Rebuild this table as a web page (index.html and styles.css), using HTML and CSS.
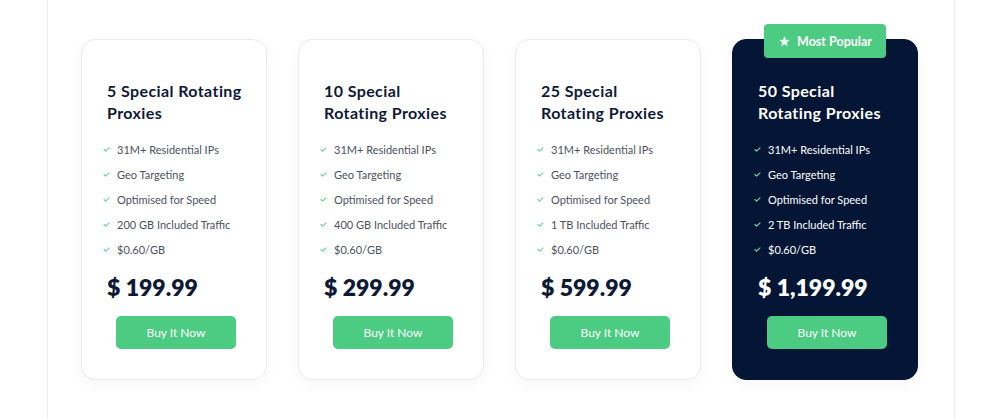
FILE: index.html
```html
<!DOCTYPE html>
<html>
<head>
<meta charset="utf-8">
<link rel="stylesheet" href="styles.css">
</head>
<body>
<div class="frame">
  <div class="cards">
    <div class="card">
      <h3 class="title">5 Special Rotating Proxies</h3>
      <ul class="features">
        <li><svg class="chk" viewBox="0 0 8 6"><polyline points="1,3 3,5 7,1"/></svg>31M+ Residential IPs</li>
        <li><svg class="chk" viewBox="0 0 8 6"><polyline points="1,3 3,5 7,1"/></svg>Geo Targeting</li>
        <li><svg class="chk" viewBox="0 0 8 6"><polyline points="1,3 3,5 7,1"/></svg>Optimised for Speed</li>
        <li><svg class="chk" viewBox="0 0 8 6"><polyline points="1,3 3,5 7,1"/></svg>200 GB Included Traffic</li>
        <li><svg class="chk" viewBox="0 0 8 6"><polyline points="1,3 3,5 7,1"/></svg>$0.60/GB</li>
      </ul>
      <div class="price">$ 199.99</div>
      <a class="buy">Buy It Now</a>
    </div>
    <div class="card">
      <h3 class="title">10 Special Rotating Proxies</h3>
      <ul class="features">
        <li><svg class="chk" viewBox="0 0 8 6"><polyline points="1,3 3,5 7,1"/></svg>31M+ Residential IPs</li>
        <li><svg class="chk" viewBox="0 0 8 6"><polyline points="1,3 3,5 7,1"/></svg>Geo Targeting</li>
        <li><svg class="chk" viewBox="0 0 8 6"><polyline points="1,3 3,5 7,1"/></svg>Optimised for Speed</li>
        <li><svg class="chk" viewBox="0 0 8 6"><polyline points="1,3 3,5 7,1"/></svg>400 GB Included Traffic</li>
        <li><svg class="chk" viewBox="0 0 8 6"><polyline points="1,3 3,5 7,1"/></svg>$0.60/GB</li>
      </ul>
      <div class="price">$ 299.99</div>
      <a class="buy">Buy It Now</a>
    </div>
    <div class="card">
      <h3 class="title">25 Special Rotating Proxies</h3>
      <ul class="features">
        <li><svg class="chk" viewBox="0 0 8 6"><polyline points="1,3 3,5 7,1"/></svg>31M+ Residential IPs</li>
        <li><svg class="chk" viewBox="0 0 8 6"><polyline points="1,3 3,5 7,1"/></svg>Geo Targeting</li>
        <li><svg class="chk" viewBox="0 0 8 6"><polyline points="1,3 3,5 7,1"/></svg>Optimised for Speed</li>
        <li><svg class="chk" viewBox="0 0 8 6"><polyline points="1,3 3,5 7,1"/></svg>1 TB Included Traffic</li>
        <li><svg class="chk" viewBox="0 0 8 6"><polyline points="1,3 3,5 7,1"/></svg>$0.60/GB</li>
      </ul>
      <div class="price">$ 599.99</div>
      <a class="buy">Buy It Now</a>
    </div>
    <div class="card card-dark">
      <div class="badge"><svg class="star" viewBox="0 0 24 24"><path d="M12 2.5l2.9 6.1 6.6.8-4.9 4.6 1.3 6.6L12 17.3l-5.9 3.3 1.3-6.6-4.9-4.6 6.6-.8z"/></svg>Most Popular</div>
      <h3 class="title">50 Special Rotating Proxies</h3>
      <ul class="features">
        <li><svg class="chk" viewBox="0 0 8 6"><polyline points="1,3 3,5 7,1"/></svg>31M+ Residential IPs</li>
        <li><svg class="chk" viewBox="0 0 8 6"><polyline points="1,3 3,5 7,1"/></svg>Geo Targeting</li>
        <li><svg class="chk" viewBox="0 0 8 6"><polyline points="1,3 3,5 7,1"/></svg>Optimised for Speed</li>
        <li><svg class="chk" viewBox="0 0 8 6"><polyline points="1,3 3,5 7,1"/></svg>2 TB Included Traffic</li>
        <li><svg class="chk" viewBox="0 0 8 6"><polyline points="1,3 3,5 7,1"/></svg>$0.60/GB</li>
      </ul>
      <div class="price">$ 1,199.99</div>
      <a class="buy">Buy It Now</a>
    </div>
  </div>
</div>
</body>
</html>
```

FILE: styles.css
```css
html, body {
  margin: 0;
  padding: 0;
  background: #ffffff;
}
body {
  font-family: Lato, "Open Sans", sans-serif;
  width: 1000px;
  height: 419px;
  overflow: hidden;
}
.frame {
  margin: 0 45px 0 47px;
  height: 419px;
  border-left: 1px solid #ededf1;
  border-right: 1px solid #ededf1;
  box-sizing: border-box;
}
.cards {
  display: flex;
  justify-content: center;
  gap: 31px;
  padding-top: 39px;
  padding-right: 3px;
}
.card {
  position: relative;
  width: 186px;
  height: 341px;
  box-sizing: border-box;
  border: 1px solid #e9eaf0;
  border-radius: 14px;
  background: #fff;
  box-shadow: 0 4px 14px rgba(20, 30, 60, 0.04);
  padding: 40px 20px 0 25px;
  display: flex;
  flex-direction: column;
  align-items: flex-start;
}
.title {
  margin: 0;
  font-size: 16px;
  line-height: 22px;
  font-weight: 700;
  color: #0e1a35;
  letter-spacing: 0.4px;
}
.features {
  list-style: none;
  margin: 13px 0 0 -4px;
  padding: 0;
}
.features li {
  font-size: 11px;
  line-height: 25px;
  height: 25px;
  color: #4d5260;
  display: flex;
  align-items: center;
}
.chk {
  width: 7px;
  height: 5px;
  margin-right: 7px;
  fill: none;
  stroke: #6fd49c;
  stroke-width: 1.4;
  stroke-linecap: round;
  stroke-linejoin: round;
}
.price {
  margin-top: 10px;
  font-size: 23px;
  line-height: 30px;
  font-weight: 800;
  color: #0e1a35;
}
.buy {
  display: flex;
  align-items: center;
  justify-content: center;
  margin: 14px 0 0 9px;
  width: 120px;
  height: 33px;
  border-radius: 5px;
  background: #4ccb82;
  color: #ffffff;
  font-size: 12px;
}
.card-dark {
  background: #041535;
  border-color: #041535;
}
.card-dark .title,
.card-dark .price,
.card-dark .features li {
  color: #ffffff;
}
.badge {
  position: absolute;
  top: -16px;
  left: 31px;
  width: 122px;
  height: 34px;
  border-radius: 4px;
  background: #4ccb82;
  color: #ffffff;
  font-size: 12.5px;
  font-weight: 700;
  display: flex;
  align-items: center;
  justify-content: center;
}
.star {
  width: 13px;
  height: 13px;
  fill: #e6f7ee;
  margin-right: 6px;
}
```
